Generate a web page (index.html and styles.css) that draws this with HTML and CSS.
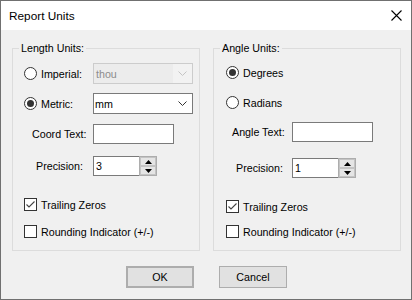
FILE: index.html
```html
<!DOCTYPE html>
<html>
<head>
<meta charset="utf-8">
<link rel="stylesheet" href="styles.css">
</head>
<body>
<div class="window">
  <div class="titlebar">
    <span class="title">Report Units</span>
    <svg class="close" width="11" height="11" viewBox="0 0 11 11"><path d="M0.5 0.5 L10.5 10.5 M10.5 0.5 L0.5 10.5" stroke="#000" stroke-width="1.1" fill="none"/></svg>
  </div>
  <div class="body">
    <div class="groups">
      <fieldset class="group">
        <legend>Length Units:</legend>
        <div class="rows rows-left">
          <div class="row h21 mt8">
            <span class="radio"></span><span class="lbl-radio">Imperial:</span>
            <div class="combo disabled"><span class="val">thou</span><span class="arrow"><svg width="9" height="5" viewBox="0 0 9 5"><polyline points="0.5,0.5 4.5,4.5 8.5,0.5" fill="none" stroke="#c4c4c4" stroke-width="1"/></svg></span></div>
          </div>
          <div class="row h21 mt9">
            <span class="radio on"></span><span class="lbl-radio">Metric:</span>
            <div class="combo"><span class="val">mm</span><span class="arrow"><svg width="9" height="5" viewBox="0 0 9 5"><polyline points="0.5,0.5 4.5,4.5 8.5,0.5" fill="none" stroke="#333" stroke-width="1"/></svg></span></div>
          </div>
          <div class="row h20 mt10">
            <span class="lbl-field lw69 pl8">Coord Text:</span>
            <div class="textbox"></div>
          </div>
          <div class="row h20 mt12">
            <span class="lbl-field lw69 pl12">Precision:</span>
            <div class="spin"><span class="spin-val">3</span><span class="spin-btns"><span class="spin-btn"><svg width="7" height="4" viewBox="0 0 7 4"><polygon points="0,4 7,4 3.5,0" fill="#000"/></svg></span><span class="spin-btn"><svg width="7" height="4" viewBox="0 0 7 4"><polygon points="0,0 7,0 3.5,4" fill="#000"/></svg></span></span></div>
          </div>
          <div class="row h13 mt22">
            <span class="check on"><svg width="11" height="11" viewBox="0 0 11 11"><polyline points="1.5,5.5 4,8 9.5,2.5" fill="none" stroke="#444" stroke-width="1.1"/></svg></span><span class="lbl">Trailing Zeros</span>
          </div>
          <div class="row h13 mt14">
            <span class="check"></span><span class="lbl">Rounding Indicator (+/-)</span>
          </div>
        </div>
      </fieldset>
      <fieldset class="group">
        <legend>Angle Units:</legend>
        <div class="rows rows-right">
          <div class="row h13 mt11">
            <span class="radio on"></span><span class="lbl">Degrees</span>
          </div>
          <div class="row h13 mt17">
            <span class="radio"></span><span class="lbl">Radians</span>
          </div>
          <div class="row h20 mt13">
            <span class="lbl-field lw66 pl6">Angle Text:</span>
            <div class="textbox"></div>
          </div>
          <div class="row h20 mt16">
            <span class="lbl-field lw66 pl10">Precision:</span>
            <div class="spin"><span class="spin-val">1</span><span class="spin-btns"><span class="spin-btn"><svg width="7" height="4" viewBox="0 0 7 4"><polygon points="0,4 7,4 3.5,0" fill="#000"/></svg></span><span class="spin-btn"><svg width="7" height="4" viewBox="0 0 7 4"><polygon points="0,0 7,0 3.5,4" fill="#000"/></svg></span></span></div>
          </div>
          <div class="row h13 mt22">
            <span class="check on"><svg width="11" height="11" viewBox="0 0 11 11"><polyline points="1.5,5.5 4,8 9.5,2.5" fill="none" stroke="#444" stroke-width="1.1"/></svg></span><span class="lbl">Trailing Zeros</span>
          </div>
          <div class="row h13 mt12">
            <span class="check"></span><span class="lbl">Rounding Indicator (+/-)</span>
          </div>
        </div>
      </fieldset>
    </div>
    <div class="buttons">
      <button class="btn default">OK</button>
      <button class="btn">Cancel</button>
    </div>
  </div>
</div>
</body>
</html>
```

FILE: styles.css
```css
* { box-sizing: border-box; }
html, body { margin: 0; padding: 0; }
body {
  font-family: "Liberation Sans", Arial, sans-serif;
  font-size: 10.7px;
  color: #000;
  background: #f0f0f0;
}
.window {
  width: 412px;
  height: 300px;
  border: 1px solid #707070;
  display: flex;
  flex-direction: column;
  background: #f0f0f0;
}
.titlebar {
  flex: none;
  height: 29px;
  background: #fff;
  display: flex;
  align-items: center;
  justify-content: space-between;
  padding: 0 9px 0 8px;
}
.title { font-size: 11.8px; }
.close { display: block; }
.body {
  flex: 1;
  display: flex;
  flex-direction: column;
  padding: 12px 10px 0 11px;
}
.groups { display: flex; gap: 13px; }
.group {
  width: 188px;
  height: 209px;
  margin: 0;
  padding: 0 0 0 6px;
  border: 1px solid #dcdcdc;
  min-width: 0;
}
.group legend {
  padding: 0 2px;
  line-height: 13px;
}
.rows { display: flex; flex-direction: column; }
.rows-left { margin-left: 5px; }
.rows-right { margin-left: 6px; }
.row { display: flex; align-items: center; }
.h21 { height: 21px; }
.h20 { height: 20px; }
.h13 { height: 13px; }
.mt8 { margin-top: 8px; }
.mt9 { margin-top: 9px; }
.mt10 { margin-top: 10px; }
.mt11 { margin-top: 11px; }
.mt12 { margin-top: 12px; }
.mt13 { margin-top: 13px; }
.mt14 { margin-top: 14px; }
.mt16 { margin-top: 16px; }
.mt17 { margin-top: 17px; }
.mt22 { margin-top: 22px; }

.radio {
  flex: none;
  width: 13px;
  height: 13px;
  border: 1px solid #333;
  border-radius: 50%;
  background: #fff;
  display: flex;
  align-items: center;
  justify-content: center;
  margin-right: 4px;
}
.radio.on::after {
  content: "";
  width: 7px;
  height: 7px;
  border-radius: 50%;
  background: #333;
}
.check {
  flex: none;
  width: 13px;
  height: 13px;
  border: 1px solid #333;
  background: #fff;
  margin-right: 4px;
  display: flex;
}
.check svg { display: block; }
.lbl { white-space: nowrap; }
.lbl-radio { width: 52px; white-space: nowrap; }
.lbl-field { white-space: nowrap; flex: none; }
.lw69 { width: 69px; }
.lw66 { width: 66px; }
.pl6 { padding-left: 6px; }
.pl8 { padding-left: 8px; }
.pl10 { padding-left: 10px; }
.pl12 { padding-left: 12px; }

.combo {
  width: 100px;
  height: 21px;
  border: 1px solid #7a7a7a;
  background: #fff;
  display: flex;
  align-items: center;
}
.combo .val { flex: 1; padding-left: 1px; }
.combo .arrow {
  width: 19px;
  height: 100%;
  display: flex;
  align-items: center;
  justify-content: center;
}
.combo .arrow svg { display: block; }
.combo.disabled {
  border-color: #cccccc;
  background: #ececec;
  color: #8d8d8d;
}
.combo.disabled .val { padding-left: 2px; }
.combo.disabled .arrow { background: #f2f2f2; }

.textbox {
  width: 81px;
  height: 20px;
  border: 1px solid #7a7a7a;
  background: #fff;
}
.spin {
  width: 64px;
  height: 20px;
  display: flex;
  background: #fff;
  border: 1px solid #7a7a7a;
  border-right: none;
}
.spin-val { flex: 1; padding-left: 2px; line-height: 18px; }
.spin-btns {
  width: 18px;
  display: flex;
  flex-direction: column;
  margin: -1px 0;
  border: 1px solid #adadad;
  background: #fff;
}
.spin-btn {
  flex: 1;
  display: flex;
  align-items: center;
  justify-content: center;
  background: #e5e5e5;
  border: 1px solid #c4c4c4;
}
.spin-btn svg { display: block; }

.buttons {
  display: flex;
  justify-content: center;
  gap: 25px;
  margin-top: 15px;
}
.btn {
  width: 68px;
  height: 22px;
  padding: 0;
  font-family: inherit;
  font-size: 10.7px;
  color: #000;
  background: #e1e1e1;
  border: 1px solid #adadad;
}
.btn.default { box-shadow: inset 0 0 0 1px #adadad; }
```
